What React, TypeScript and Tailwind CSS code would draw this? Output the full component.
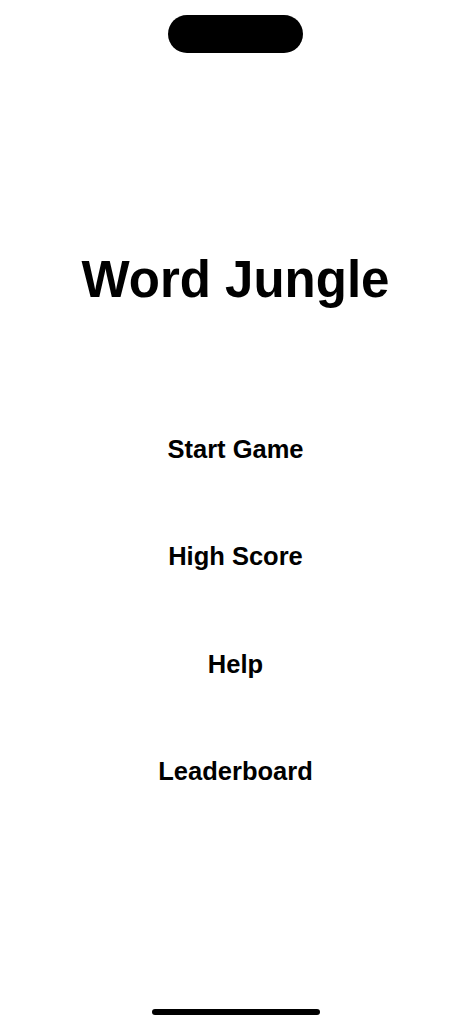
import React from 'react';

const MENU_ITEMS = ['Start Game', 'High Score', 'Help', 'Leaderboard'];

export default function App() {
  return (
    <div
      className="relative min-h-screen w-full bg-white text-black"
      style={{ fontFamily: '"Liberation Sans", Arial, sans-serif' }}
    >
      {/* Dynamic island */}
      <div className="flex justify-center pt-[15px]">
        <div className="h-[38px] w-[135px] rounded-full bg-black" />
      </div>

      <main className="flex flex-col items-center">
        <h1 className="mt-[197px] text-[51px] font-bold leading-[60px]">Word Jungle</h1>

        <nav className="mt-[85px] flex w-full flex-col items-center">
          {MENU_ITEMS.map((label) => (
            <button
              key={label}
              type="button"
              className="flex h-[107.5px] items-center justify-center text-[25.5px] font-bold"
            >
              {label}
            </button>
          ))}
        </nav>
      </main>

      {/* Home indicator */}
      <div className="absolute inset-x-0 bottom-[9px] flex justify-center">
        <div className="h-[6px] w-[168px] rounded-full bg-black" />
      </div>
    </div>
  );
}
